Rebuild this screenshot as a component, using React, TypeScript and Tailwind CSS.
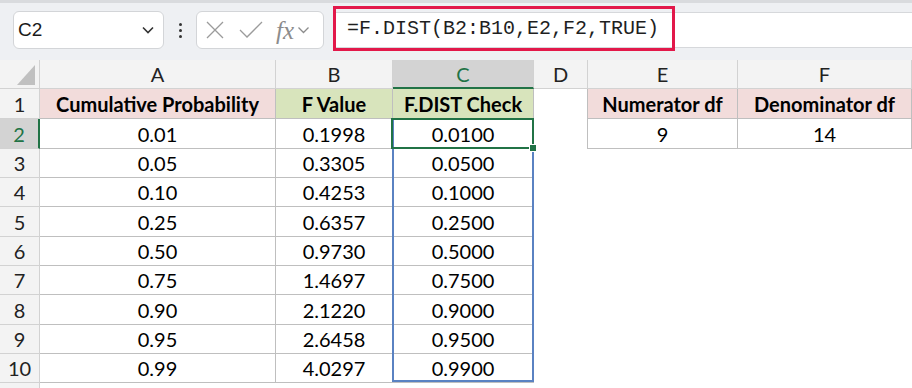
import React from "react"

const colWidths = "grid-cols-[40px_236px_117px_141px_54px_150px_174px]"

const data: [string, string, string][] = [
  ["0.01", "0.1998", "0.0100"],
  ["0.05", "0.3305", "0.0500"],
  ["0.10", "0.4253", "0.1000"],
  ["0.25", "0.6357", "0.2500"],
  ["0.50", "0.9730", "0.5000"],
  ["0.75", "1.4697", "0.7500"],
  ["0.90", "2.1220", "0.9000"],
  ["0.95", "2.6458", "0.9500"],
  ["0.99", "4.0297", "0.9900"],
]

const letters = ["A", "B", "C", "D", "E", "F"]

function Chevron() {
  return (
    <svg width="14" height="10" viewBox="0 0 14 10" fill="none">
      <path d="M2 2.5 L7 7.5 L12 2.5" stroke="#333" strokeWidth="1.6" />
    </svg>
  )
}

function Toolbar() {
  return (
    <div className="h-[60px] bg-[#eef0f3] border-t-[3px] border-[#d9dbde] flex items-center pl-[13px] pb-[3px]">
      <div className="w-[151px] h-[38px] bg-white rounded-[6px] border border-[#d3d5d8] flex items-center justify-between pl-[4px] pr-[8px]">
        <span className="font-['Liberation_Sans',sans-serif] text-[19px] text-[#1a1a1a]">C2</span>
        <Chevron />
      </div>
      <div className="w-[32px] flex flex-col items-center gap-[3px]">
        <span className="w-[3px] h-[3px] rounded-full bg-[#333]" />
        <span className="w-[3px] h-[3px] rounded-full bg-[#333]" />
        <span className="w-[3px] h-[3px] rounded-full bg-[#333]" />
      </div>
      <div className="w-[128px] h-[38px] bg-white rounded-[6px] border border-[#d3d5d8] flex items-center pl-[8px]">
        <svg width="20" height="20" viewBox="0 0 20 20" fill="none">
          <path d="M2 2 L18 18 M18 2 L2 18" stroke="#9b9b9b" strokeWidth="1.3" />
        </svg>
        <svg className="ml-[14px]" width="24" height="20" viewBox="0 0 24 20" fill="none">
          <path d="M1 10 L8 17 L23 2" stroke="#9b9b9b" strokeWidth="1.3" />
        </svg>
        <span className="ml-[13px] font-['Liberation_Serif',serif] italic text-[25px] leading-none text-[#8c8c8c]">fx</span>
        <svg className="ml-[3px]" width="13" height="10" viewBox="0 0 13 10" fill="none">
          <path d="M1.5 2.5 L6.5 7.5 L11.5 2.5" stroke="#8c8c8c" strokeWidth="1.3" />
        </svg>
      </div>
      <div className="ml-[9px] flex-1 h-[36px] bg-white border-y border-[#d6d8db] flex items-center">
        <div className="w-[342px] h-[45px] border-[3px] border-[#e2184a] flex items-center pl-[11px] -mt-[3px]">
          <span className="font-['Liberation_Mono',monospace] text-[20px] text-[#1f1f1f]">
            =F.DIST(B2:B10,E2,F2,TRUE)
          </span>
        </div>
      </div>
    </div>
  )
}

function Grid() {
  const hdr = "bg-[#f3f3f3] border-r border-b border-[#d2d2d2] flex items-center justify-center text-[20px] text-[#222]"
  const tbl = "border-r border-b border-[#bfbfbf] flex items-center justify-center text-[20px] text-black"
  const cells: React.ReactNode[] = []

  cells.push(
    <div key="corner" className="bg-[#f3f3f3] border-r border-b border-[#d2d2d2] flex items-end justify-end pr-[4px] pb-[3px]">
      <svg width="18" height="20" viewBox="0 0 18 20">
        <path d="M18 0 L18 20 L0 20 Z" fill="#c0c0c0" />
      </svg>
    </div>,
  )
  letters.forEach((l) => {
    const active = l === "C"
    cells.push(
      <div
        key={"h" + l}
        className={
          active
            ? "bg-[#d3d3d3] border-r border-[#d2d2d2] border-b-2 border-b-[#217346] flex items-center justify-center text-[20px] text-[#217346]"
            : hdr
        }
      >
        {l}
      </div>,
    )
  })

  // row 1
  cells.push(<div key="r1" className={hdr}>1</div>)
  cells.push(<div key="a1" className={tbl + " bg-[#f2dcdb] font-bold"}>Cumulative Probability</div>)
  cells.push(<div key="b1" className={tbl + " bg-[#d8e4bc] font-bold"}>F Value</div>)
  cells.push(<div key="c1" className={tbl + " bg-[#d8e4bc] font-bold"}>F.DIST Check</div>)
  cells.push(<div key="d1" className="border-r border-[#bfbfbf]" />)
  cells.push(<div key="e1" className={tbl + " bg-[#f2dcdb] font-bold"}>Numerator df</div>)
  cells.push(<div key="f1" className={tbl + " bg-[#f2dcdb] font-bold"}>Denominator df</div>)

  data.forEach((r, i) => {
    const n = i + 2
    const sel = n === 2
    cells.push(
      <div
        key={"r" + n}
        className={
          sel
            ? "bg-[#d3d3d3] border-r-2 border-r-[#217346] border-b border-b-[#d2d2d2] flex items-center justify-center text-[20px] text-[#217346]"
            : hdr
        }
      >
        {n}
      </div>,
    )
    cells.push(<div key={"a" + n} className={tbl}>{r[0]}</div>)
    cells.push(<div key={"b" + n} className={tbl}>{r[1]}</div>)
    cells.push(
      <div key={"c" + n} className={tbl + (sel ? " relative" : "")}>
        {r[2]}
        {sel && (
          <>
            {/* referenced range C2:C10 */}
            <div className="absolute -left-px -top-px w-[142px] h-[264px] border-2 border-[#5a82c2] pointer-events-none" />
            {/* active cell */}
            <div className="absolute -left-[2px] -top-px w-[143px] h-[31px] border-2 border-[#217346] pointer-events-none">
              <div className="absolute -right-[5px] -bottom-[5px] w-[8px] h-[8px] bg-[#217346] border border-white" />
            </div>
          </>
        )}
      </div>,
    )
    if (sel) {
      cells.push(<div key="d2" className="border-r border-[#bfbfbf]" />)
      cells.push(<div key="e2" className={tbl}>9</div>)
      cells.push(<div key="f2" className={tbl}>14</div>)
    } else {
      cells.push(<div key={"d" + n} />)
      cells.push(<div key={"e" + n} />)
      cells.push(<div key={"f" + n} />)
    }
  })

  cells.push(<div key="r11" className={hdr} />)
  for (let k = 0; k < 6; k++) cells.push(<div key={"x" + k} />)

  return (
    <div
      className={
        "grid " +
        colWidths +
        " grid-rows-[29px_30px_30px_29px_29px_30px_29px_29px_30px_29px_29px_30px] font-['Lato',sans-serif]"
      }
    >
      {cells}
    </div>
  )
}

export default function App() {
  return (
    <div className="w-[912px] h-[388px] overflow-hidden bg-white">
      <Toolbar />
      <Grid />
    </div>
  )
}
